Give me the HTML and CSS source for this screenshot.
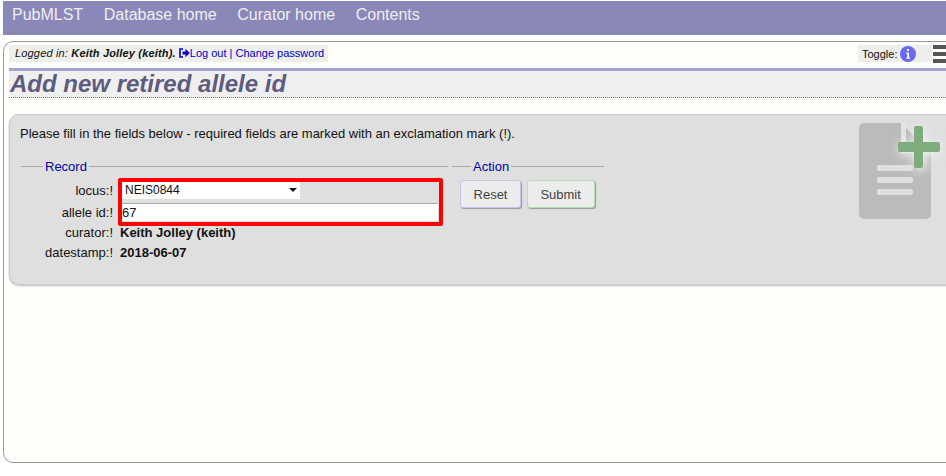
FILE: index.html
```html
<!DOCTYPE html>
<html lang="en">
<head>
    <meta charset="UTF-8">
    <title>Add new retired allele id</title>
    <link rel="stylesheet" href="styles.css">
</head>
<body>
    <nav class="menubar">
        <a href="#">PubMLST</a>
        <a href="#">Database home</a>
        <a href="#">Curator home</a>
        <a href="#">Contents</a>
    </nav>
    <div class="main">
        <div class="topline">
            <div class="logged">
                <span class="who">Logged in: <b>Keith Jolley (keith).</b></span>
                <svg class="logout" width="11" height="10" viewBox="0 0 11 10">
                    <path d="M4 1H1v8h3" fill="none" stroke="#00c" stroke-width="1.6"/>
                    <path d="M3.5 3.5H6.5V.8L10.8 5 6.5 9.2V6.5H3.5z" fill="#00c"/>
                </svg><a href="#">Log out</a> | <a href="#">Change password</a>
            </div>
            <div class="toggles">
                <div class="toggle">
                    Toggle:
                    <svg class="info" width="16" height="16" viewBox="0 0 16 16">
                        <circle cx="8" cy="8" r="8" fill="#6a6af0"/>
                        <path d="M7 3h2v2H7zM6.3 6.5H9v5h1v1.2H6.3v-1.2h1V7.7h-1z" fill="#fff"/>
                    </svg>
                </div>
                <div class="burger"><i></i><i></i><i></i></div>
            </div>
        </div>
        <h1 class="title">Add new retired allele id</h1>
        <div class="box">
            <p class="intro">Please fill in the fields below - required fields are marked with an exclamation mark (!).</p>
            <div class="forms">
                <fieldset class="record">
                    <legend>Record</legend>
                    <div class="rows">
                        <label>locus:!</label>
                        <div class="select">NEIS0844<span class="arrow"></span></div>
                        <label>allele id:!</label>
                        <div class="input">67</div>
                        <label>curator:!</label>
                        <b>Keith Jolley (keith)</b>
                        <label>datestamp:!</label>
                        <b>2018-06-07</b>
                    </div>
                </fieldset>
                <fieldset class="action">
                    <legend>Action</legend>
                    <button class="reset">Reset</button>
                    <button class="submit">Submit</button>
                </fieldset>
            </div>
            <div class="highlight"></div>
            <svg class="bigicon" width="84" height="98" viewBox="0 0 84 98">
                <defs>
                    <filter id="glow" x="-50%" y="-50%" width="200%" height="200%">
                        <feGaussianBlur stdDeviation="5"/>
                    </filter>
                </defs>
                <path d="M5 0H42L72 30V91a5 5 0 0 1-5 5H5a5 5 0 0 1-5-5V5a5 5 0 0 1 5-5z" fill="#bbb"/>
                <path d="M42 0h5V25h25v5H42z" fill="#e4e4e4"/>
                <path d="M40 20h42v12H40zM55 5h12v42H55z" fill="#eee" filter="url(#glow)"/>
                <rect x="18" y="42" width="36" height="6" rx="2" fill="#e0e0e0"/>
                <rect x="18" y="54" width="36" height="6" rx="2" fill="#e0e0e0"/>
                <rect x="18" y="66" width="36" height="6" rx="2" fill="#e0e0e0"/>
                <rect x="39" y="19" width="42" height="10" rx="2" fill="#7fac7c"/>
                <rect x="55" y="3" width="9" height="42" rx="2" fill="#7fac7c"/>
            </svg>
        </div>
    </div>
</body>
</html>
```

FILE: styles.css
```css
html, body {
    margin: 0;
    padding: 0;
    height: 100%;
    overflow: hidden;
    background: #fff;
}
body {
    font-family: "Liberation Sans", Arial, sans-serif;
    font-size: 13px;
    color: #111;
}
a {
    color: inherit;
    text-decoration: none;
}

.menubar {
    display: flex;
    gap: 20.6px;
    height: 34px;
    margin: 1px 0 0 3px;
    padding-left: 9px;
    line-height: 27px;
    font-size: 16px;
    background: #8a88b9;
    color: #eee;
}

.main {
    box-sizing: border-box;
    width: 980px;
    height: 422px;
    margin: 6px 0 0 3px;
    padding: 3px 0 0 5px;
    border: 1px solid #999;
    border-radius: 10px;
    background: #fdfef9;
}

.topline {
    display: flex;
    justify-content: space-between;
    width: 937px;
    height: 23px;
}
.logged {
    height: 17px;
    padding: 0 4px 0 6px;
    line-height: 17px;
    font-size: 11px;
    background: #eeeeea;
    color: #00c;
}
.who {
    font-style: italic;
    letter-spacing: .17px;
    color: #111;
}
.logout {
    vertical-align: -1px;
}
.toggles {
    display: flex;
    gap: 1px;
}
.toggle {
    box-sizing: border-box;
    display: flex;
    align-items: center;
    gap: 3px;
    width: 74px;
    height: 17px;
    padding-left: 4px;
    font-size: 11px;
    background: #eeeeea;
}
.burger {
    display: flex;
    flex-direction: column;
    gap: 3px;
    width: 13px;
}
.burger i {
    display: block;
    height: 4px;
    background: #555;
}

.title {
    margin: 0 0 16px;
    height: 26px;
    padding-left: 1px;
    border-top: 3px solid #a3a1d2;
    border-bottom: 1px dotted #77759c;
    background: #efefef;
    line-height: 26px;
    font-size: 24px;
    font-style: italic;
    color: #5d5c7e;
}

.box {
    position: relative;
    box-sizing: border-box;
    height: 171px;
    padding: 11px 10px;
    border: 1px solid #ccc;
    border-radius: 10px;
    box-shadow: 0 1px 2px #bbb;
    background: #dfdfdf;
}
.intro {
    margin: 0 0 17px;
    line-height: 16px;
}
.forms {
    display: flex;
    gap: 4px;
}
fieldset {
    box-sizing: border-box;
    margin: 0;
    padding: 0;
    border: 0;
    border-top: 1px solid #aaa;
}
legend {
    margin-left: 22px;
    padding: 0 2px;
    color: #00a;
}
.record {
    width: 427px;
    margin-left: 1px;
}
.action {
    width: 152px;
    padding-left: 8px;
}
.action legend {
    margin-left: 11px;
}
.rows {
    display: grid;
    grid-template-columns: 92px 1fr;
    grid-template-rows: 22px 22px 19px 20px;
    column-gap: 7px;
    align-items: center;
    margin-top: 5px;
}
.rows label {
    text-align: right;
}
.select {
    display: flex;
    justify-content: space-between;
    align-items: center;
    box-sizing: border-box;
    width: 178px;
    height: 18px;
    margin-left: 2px;
    padding: 0 3px 0 3px;
    background: #fff;
    font-size: 12px;
}
.arrow {
    border: 4px solid transparent;
    border-top-color: #111;
    border-bottom: 0;
}
.input {
    box-sizing: border-box;
    width: 318px;
    height: 18px;
    padding-left: 2px;
    border-top: 1px solid #aaa;
    background: #fff;
    line-height: 18px;
}
.action button {
    margin: 6px 2px 0 0;
    height: 28px;
    padding: 0;
    border: 1px solid #ccc;
    border-radius: 3px;
    box-shadow: 1px 1px 1px #999;
    background: #ececec;
    font: 13px "Liberation Sans", Arial, sans-serif;
    color: #444;
}
.action .reset {
    width: 61px;
    border-color: #c4c4f0;
}
.action .submit {
    width: 68px;
    border-color: #b0e0b0;
}

.highlight {
    position: absolute;
    left: 108px;
    top: 63px;
    width: 317px;
    height: 40px;
    border: 4px solid #f00;
    border-radius: 2px;
}
.bigicon {
    position: absolute;
    left: 849px;
    top: 8px;
    overflow: visible;
}
```
